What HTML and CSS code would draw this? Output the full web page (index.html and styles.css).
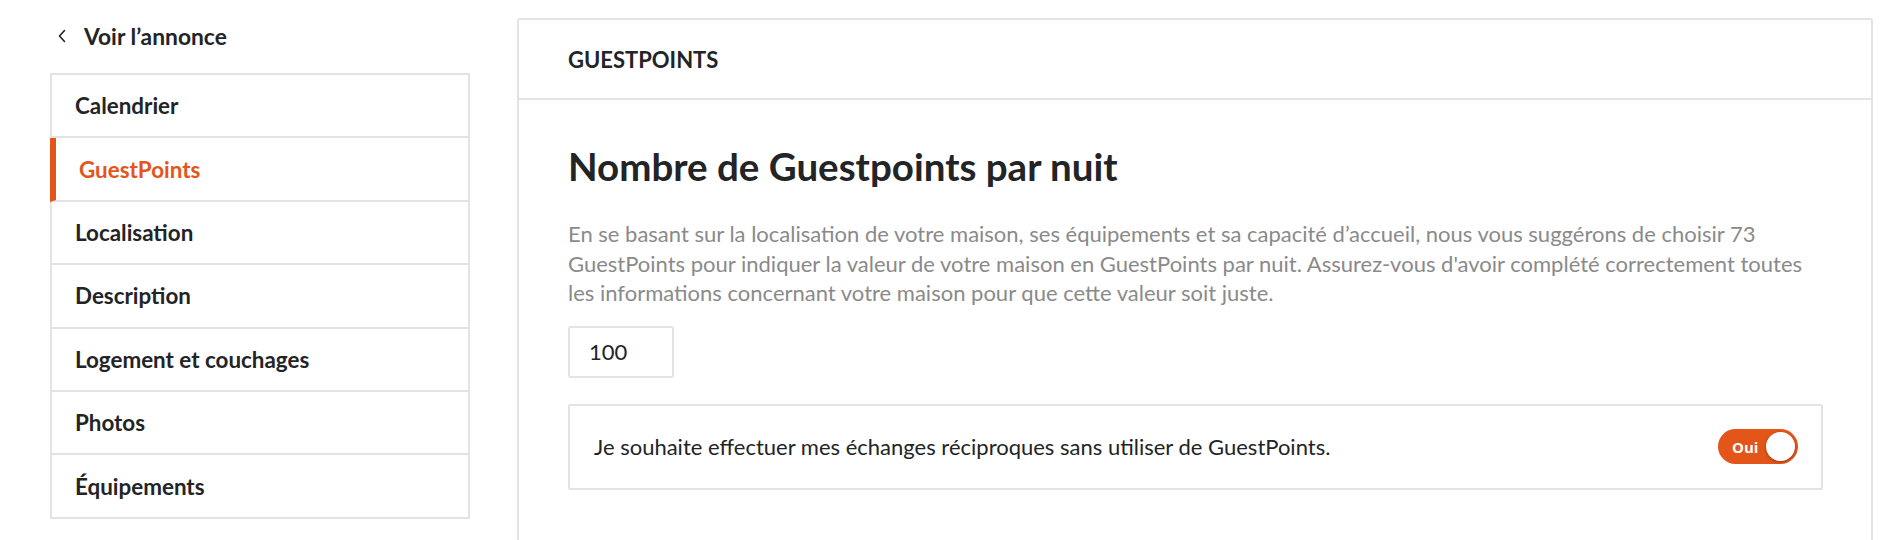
FILE: index.html
```html
<!DOCTYPE html>
<html lang="fr">
<head>
    <meta charset="UTF-8">
    <meta name="viewport" content="width=device-width, initial-scale=1.0">
    <title>GuestPoints</title>
    <link rel="stylesheet" href="styles.css">
</head>
<body>
    <div class="page">
        <aside class="sidebar">
            <a class="back-link" href="#">
                <svg class="back-icon" width="10" height="14" viewBox="0 0 10 14">
                    <polyline points="7.5,1.5 2.5,7 7.5,12.5" fill="none" stroke="#222" stroke-width="1.6" stroke-linecap="round" stroke-linejoin="round"/>
                </svg>
                Voir l’annonce
            </a>
            <ul class="nav-list">
                <li class="nav-item">Calendrier</li>
                <li class="nav-item active">GuestPoints</li>
                <li class="nav-item">Localisation</li>
                <li class="nav-item">Description</li>
                <li class="nav-item">Logement et couchages</li>
                <li class="nav-item">Photos</li>
                <li class="nav-item">Équipements</li>
            </ul>
        </aside>

        <main class="panel">
            <div class="panel-header">GUESTPOINTS</div>
            <div class="panel-body">
                <h1>Nombre de Guestpoints par nuit</h1>
                <p class="hint">En se basant sur la localisation de votre maison, ses équipements et sa capacité d’accueil, nous vous suggérons de choisir 73 GuestPoints pour indiquer la valeur de votre maison en GuestPoints par nuit. Assurez-vous d'avoir complété correctement toutes les informations concernant votre maison pour que cette valeur soit juste.</p>
                <input class="points-input" type="text" value="100">
                <div class="option-row">
                    <span>Je souhaite effectuer mes échanges réciproques sans utiliser de GuestPoints.</span>
                    <label class="switch">
                        <span class="switch-label">Oui</span>
                        <span class="switch-knob"></span>
                    </label>
                </div>
            </div>
        </main>
    </div>
</body>
</html>
```

FILE: styles.css
```css
body {
    font-family: Lato, "Open Sans", sans-serif;
    color: #222426;
    background-color: #fff;
    margin: 0;
}
.page {
    display: flex;
    gap: 47px;
    padding: 0 9px 0 50px;
}
.sidebar {
    width: 420px;
    flex-shrink: 0;
    padding-top: 14px;
}
.back-link {
    display: flex;
    align-items: center;
    gap: 17px;
    height: 44px;
    margin-bottom: 15px;
    padding-left: 7px;
    font-size: 22.8px;
    font-weight: bold;
    color: #222426;
    text-decoration: none;
}
.nav-list {
    list-style: none;
    margin: 0;
    padding: 0;
    border: 2px solid #e3e3e3;
}
.nav-item {
    display: flex;
    align-items: center;
    height: 61.4px;
    padding-left: 23px;
    font-size: 22.4px;
    font-weight: bold;
    border-bottom: 2px solid #e3e3e3;
}
.nav-item:last-child {
    border-bottom: none;
}
.nav-item.active {
    margin-left: -2px;
    border-left: 6px solid #e4551a;
    color: #e4551a;
}
.panel {
    flex: 1;
    margin-top: 18px;
    min-height: 540px;
    border: 2px solid #e3e3e3;
    border-bottom: none;
    border-radius: 3px 3px 0 0;
}
.panel-header {
    display: flex;
    align-items: center;
    height: 78px;
    padding: 0 49px;
    font-size: 22px;
    font-weight: bold;
    border-bottom: 2px solid #e3e3e3;
}
.panel-body {
    padding: 42px 48px 0 49px;
}
.panel-body h1 {
    margin: 0;
    font-size: 38.5px;
    line-height: 48px;
    font-weight: bold;
}
.hint {
    margin: 29px 0 18px;
    font-size: 22px;
    line-height: 29.5px;
    color: #8a8a8a;
}
.points-input {
    display: block;
    box-sizing: border-box;
    width: 106px;
    height: 52px;
    padding: 0 19px;
    font-family: inherit;
    font-size: 22px;
    color: #222426;
    border: 2px solid #e3e3e3;
    border-radius: 3px;
}
.option-row {
    display: flex;
    align-items: center;
    justify-content: space-between;
    box-sizing: border-box;
    height: 86px;
    margin-top: 26px;
    padding: 0 23px 0 24px;
    font-size: 22px;
    border: 2px solid #e3e3e3;
    border-radius: 2px;
}
.switch {
    display: flex;
    align-items: center;
    justify-content: space-between;
    box-sizing: border-box;
    width: 80px;
    height: 35px;
    padding: 0 3px 0 14px;
    border-radius: 18px;
    background-color: #e4551a;
    cursor: pointer;
}
.switch-label {
    font-family: "Open Sans", sans-serif;
    font-size: 15px;
    font-weight: bold;
    color: #fff;
}
.switch-knob {
    width: 29px;
    height: 29px;
    border-radius: 50%;
    background-color: #fff;
    box-shadow: 0 1px 3px rgba(0, 0, 0, 0.35);
}
```
